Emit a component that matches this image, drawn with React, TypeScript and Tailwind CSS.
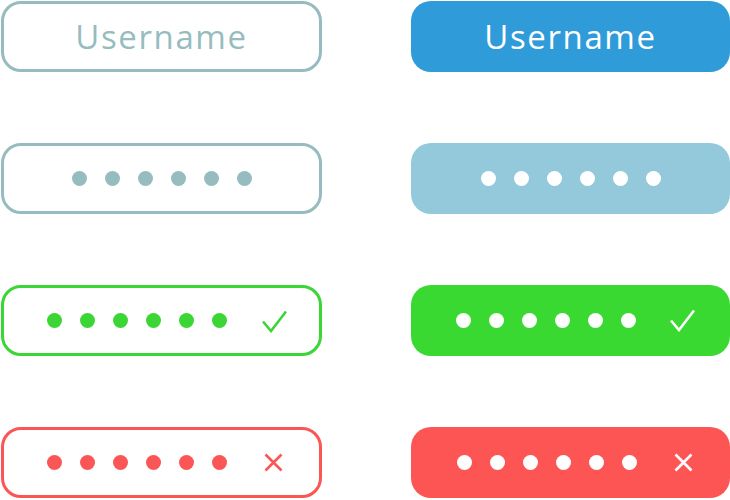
import React from "react";

type Kind = "plain" | "ok" | "err";

function Dots({ color }: { color: string }) {
	return (
		<div className="flex items-center gap-[18px]">
			{[0, 1, 2, 3, 4, 5].map((i) => (
				<span key={i} className={`block h-[15px] w-[15px] rounded-full ${color}`} />
			))}
		</div>
	);
}

function Check({ color }: { color: string }) {
	return (
		<svg width="25" height="23" viewBox="0 0 25 23" className={color}>
			<path d="M1 11.5 L9 21 L24 1.5" fill="none" stroke="currentColor" strokeWidth="2.6" />
		</svg>
	);
}

function Cross({ color }: { color: string }) {
	return (
		<svg width="19" height="19" viewBox="0 0 19 19" className={color}>
			<path d="M1.5 1.5 L17.5 17.5 M17.5 1.5 L1.5 17.5" fill="none" stroke="currentColor" strokeWidth="2.6" />
		</svg>
	);
}

function Field({
	box,
	dot,
	icon,
	kind,
	iconPos = "",
}: {
	box: string;
	dot: string;
	icon: string;
	kind: Kind;
	iconPos?: string;
}) {
	if (kind === "plain") {
		return (
			<div className={`flex h-[71px] items-center justify-center rounded-[20px] ${box}`}>
				<Dots color={dot} />
			</div>
		);
	}
	return (
		<div className={`flex h-[71px] items-center rounded-[20px] ${box}`}>
			<Dots color={dot} />
			<div className={`ml-auto flex ${iconPos}`}>
				{kind === "ok" ? <Check color={icon} /> : <Cross color={icon} />}
			</div>
		</div>
	);
}

export default function App() {
	const font = { fontFamily: '"Open Sans", "Liberation Sans", sans-serif' };
	return (
		<div className="h-[500px] w-[730px] bg-white pl-[1px] pt-[1px]" style={font}>
			<div className="grid grid-cols-[321px_319px] gap-x-[89px] gap-y-[71px]">
				<div className="flex h-[71px] items-center justify-center rounded-[20px] border-[3px] border-[#97bcc0]">
					<span className="text-[33px] tracking-[1.6px] text-[#97bcc0]">Username</span>
				</div>
				<div className="flex h-[71px] items-center justify-center rounded-[20px] bg-[#2f9bd9]">
					<span className="text-[33px] tracking-[1.6px] text-white">Username</span>
				</div>

				<Field kind="plain" box="border-[3px] border-[#97bcc0]" dot="bg-[#97bcc0]" icon="" />
				<Field kind="plain" box="bg-[#94c9dc]" dot="bg-white" icon="" />

				<Field
					kind="ok"
					box="border-[3px] border-[#3bd635] pl-[43px]"
					dot="bg-[#3bd635]"
					icon="text-[#3bd635]"
					iconPos="mr-[32px] mt-[1px]"
				/>
				<Field
					kind="ok"
					box="bg-[#3ad932] pl-[45px]"
					dot="bg-white"
					icon="text-white"
					iconPos="mr-[35px]"
				/>

				<Field
					kind="err"
					box="border-[3px] border-[#fb5656] pl-[43px]"
					dot="bg-[#fb5656]"
					icon="text-[#fb5656]"
					iconPos="mr-[36px]"
				/>
				<Field
					kind="err"
					box="bg-[#fd5454] pl-[46px]"
					dot="bg-white"
					icon="text-white"
					iconPos="mr-[37px]"
				/>
			</div>
		</div>
	);
}
